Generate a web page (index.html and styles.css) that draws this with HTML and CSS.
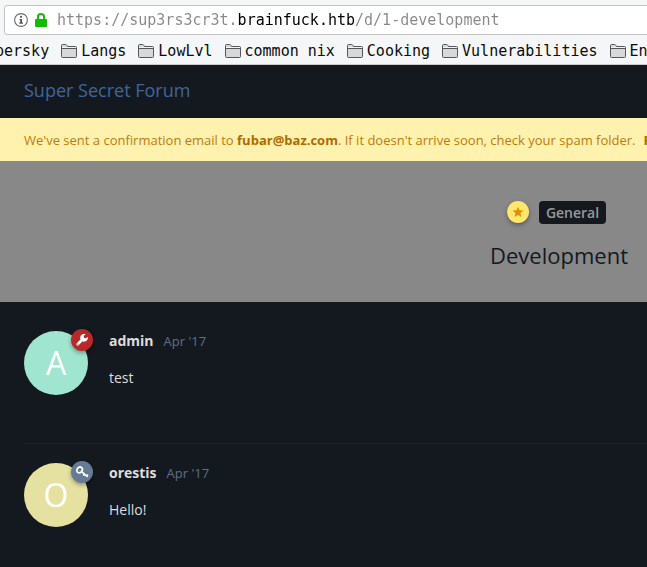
FILE: index.html
```html
<!DOCTYPE html>
<html lang="en">
<head>
<meta charset="utf-8">
<title>Development - Super Secret Forum</title>
<link rel="stylesheet" href="styles.css">
</head>
<body>
<svg class="defs" aria-hidden="true">
  <symbol id="folder" viewBox="0 0 16 14">
    <path d="M.5 12.5V1.5Q.5.5 1.5.5H4.5Q5.5.5 6 1.5L6.5 2.5H14.5Q15.5 2.5 15.5 3.5V12.5Q15.5 13.5 14.5 13.5H1.5Q.5 13.5.5 12.5Z" fill="#d6d8d9" stroke="#55585a"/>
    <path d="M1 4.5H15" stroke="#55585a"/>
    <path d="M1 3.5H15" stroke="#f4f5f6"/>
  </symbol>
</svg>
<div class="browser">
  <div class="address">
    <svg class="info" viewBox="0 0 14 14" aria-hidden="true"><circle cx="7" cy="7" r="6.4" fill="none" stroke="#6c6c6c" stroke-width="1.1"/><circle cx="7" cy="3.8" r="1.1" fill="#555"/><path d="M5.5 6H8V9.6H9V10.7H5.2V9.6H6.2V7H5.5Z" fill="#555"/></svg>
    <svg class="lock" viewBox="0 0 12 14" aria-hidden="true"><rect y="6" width="12" height="8" rx="1" fill="#12bc00"/><path d="M2.9 7V4.2a3.1 3.1 0 0 1 6.2 0V7" fill="none" stroke="#12bc00" stroke-width="2"/></svg>
    <input class="url" type="text" aria-label="Address" value="https://sup3rs3cr3t.brainfuck.htb/d/1-development">
  </div>
  <nav class="bookmarks" aria-label="Bookmarks">
    <a href="#">persky</a>
    <a href="#"><svg><use href="#folder"/></svg>Langs</a>
    <a href="#"><svg><use href="#folder"/></svg>LowLvl</a>
    <a href="#"><svg><use href="#folder"/></svg>common nix</a>
    <a href="#"><svg><use href="#folder"/></svg>Cooking</a>
    <a href="#"><svg><use href="#folder"/></svg>Vulnerabilities</a>
    <a href="#"><svg><use href="#folder"/></svg>En</a>
  </nav>
</div>
<header class="site-header"><a href="#">Super Secret Forum</a></header>
<div class="alert">
  <span>We've sent a confirmation email to <strong>fubar@baz.com</strong>. If it doesn't arrive soon, check your spam folder.</span>
  <a href="#">R</a>
</div>
<section class="hero">
  <div class="hero-content">
    <div class="tags">
      <span class="badge sticky"><svg viewBox="0 0 14 14"><path d="M7 .8 8.8 4.9 13.3 5.3 9.9 8.3 10.9 12.8 7 10.4 3.1 12.8 4.1 8.3.7 5.3 5.2 4.9Z" fill="#df9000"/></svg></span>
      <a class="tag" href="#">General</a>
    </div>
    <h1>Development</h1>
  </div>
</section>
<main class="posts">
  <article class="post">
    <div class="avatar mint">A
      <span class="badge corner admin"><svg viewBox="0 0 14 14"><path d="M2.7 11.3 8.2 5.8" stroke="#fff" stroke-width="2.7" stroke-linecap="round"/><path d="M12.9 4.1A3.9 3.9 0 1 1 10.6 1.2L8.7 3.1 8.9 5 10.8 5.2Z" fill="#fff"/><circle cx="2.9" cy="11.1" r=".7" fill="#b72a2a"/></svg></span>
    </div>
    <div class="body">
      <div class="meta"><a href="#">admin</a><time>Apr '17</time></div>
      <p>test</p>
    </div>
  </article>
  <article class="post">
    <div class="avatar sand">O
      <span class="badge corner key"><svg viewBox="0 0 14 14"><g fill="none" stroke="#fff"><ellipse cx="4.6" cy="4.9" rx="2.5" ry="3.1" transform="rotate(38 4.6 4.9)" stroke-width="1.7"/><path d="M6.6 6.7 12.6 11.8M9.4 9.2 8.3 10.5M11.8 11.1 12.9 9.5" stroke-width="1.6"/></g></svg></span>
    </div>
    <div class="body">
      <div class="meta"><a href="#">orestis</a><time>Apr '17</time></div>
      <p>Hello!</p>
    </div>
  </article>
</main>
</body>
</html>
```
FILE: styles.css
```css
* { box-sizing: border-box; }
body {
  margin: 0;
  min-height: 100vh;
  background: #14191f;
  color: #ddd;
  font-family: "Open Sans", sans-serif;
  font-size: 14px;
  line-height: 24px;
  overflow: hidden;
}
a { color: inherit; text-decoration: none; }
.defs { position: absolute; width: 0; height: 0; }
.browser {
  padding-top: 5px;
  background: #f5f6f7;
  border-bottom: 1px solid #ccc;
  overflow: hidden;
  font-family: "DejaVu Sans Mono", monospace;
  font-size: 15px;
}
.address {
  display: flex;
  align-items: center;
  height: 30px;
  margin: 0 -8px 0 4px;
  padding-left: 9px;
  background: #fff;
  border: 1px solid #c4c4c4;
  border-radius: 3px;
}
.info { width: 14px; height: 14px; }
.lock { width: 12px; height: 14px; margin: 0 10px 0 7px; }
.url {
  flex: 1;
  min-width: 0;
  padding: 0;
  border: 0;
  outline: 0;
  font: inherit;
  color: transparent;
  background: linear-gradient(90deg, #888 20ch, #000 20ch 33ch, #888 33ch);
  -webkit-background-clip: text;
  background-clip: text;
}
.bookmarks {
  display: flex;
  gap: 12px;
  height: 29px;
  padding-top: 4px;
  margin-left: -5px;
  color: #0c0c0d;
  white-space: nowrap;
}
.bookmarks a { display: flex; align-items: center; gap: 4px; height: 24px; }
.bookmarks svg { width: 16px; height: 14px; }
.site-header {
  padding: 13px 24px 16px;
  color: #41659b;
  font-size: 18px;
}
.alert {
  display: flex;
  gap: 8px;
  padding: 10px 0 9px 24px;
  background: #fff2ae;
  color: #bf7b0a;
  font-size: 13px;
  white-space: nowrap;
}
.alert strong, .alert a { font-weight: 700; color: #ad6c00; }
.hero {
  display: flex;
  justify-content: flex-end;
  padding: 39px 19px 31px;
  background: #888;
}
.hero-content { text-align: center; }
.tags { display: flex; justify-content: center; align-items: center; gap: 10px; height: 24px; padding-right: 5px; }
.tag {
  padding: 0 7px;
  border-radius: 4px;
  background: #14191f;
  color: #999;
  font-weight: 600;
  line-height: 23px;
}
h1 {
  margin: 16px 0 0;
  color: #14191f;
  font-size: 22px;
  font-weight: 400;
  line-height: 31px;
}
.badge {
  display: flex;
  align-items: center;
  justify-content: center;
  width: 22px;
  height: 22px;
  border-radius: 50%;
  box-shadow: 0 2px 4px rgba(0, 0, 0, .35);
}
.badge svg { width: 14px; height: 14px; fill: none; }
.sticky { background: #ffe76e; }
.sticky svg { width: 12px; height: 12px; }
.admin { background: #b72a2a; }
.key { background: #667a94; }
.posts { padding-left: 24px; }
.post {
  display: flex;
  gap: 21px;
  padding: 29px 0 48px;
}
.post + .post { padding-top: 19px; border-top: 1px solid #1c232c; }
.avatar {
  position: relative;
  flex: none;
  width: 64px;
  height: 64px;
  border-radius: 50%;
  color: #fff;
  font-size: 32px;
  line-height: 64px;
  text-align: center;
}
.mint { background: #a0e5cf; }
.sand { background: #e5e1a0; }
.corner { position: absolute; top: -2px; right: -5px; }
.meta { display: flex; gap: 10px; line-height: 20px; }
.meta a { font-weight: 700; }
.meta time { color: #5f6f83; font-size: 13px; }
.body p { margin: 15px 0 0; line-height: 24px; }
```
